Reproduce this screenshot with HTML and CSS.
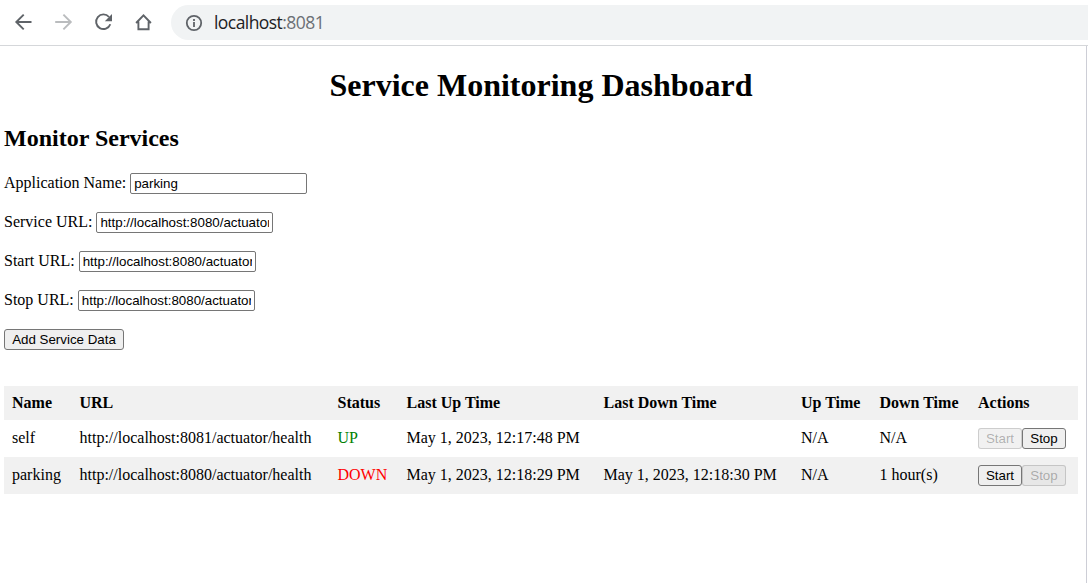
FILE: index.html
```html
<!DOCTYPE html>
<html lang="en">
<head>
<meta charset="utf-8">
<title>Service Monitoring Dashboard</title>
<link rel="stylesheet" href="styles.css">
</head>
<body>
<header class="toolbar">
  <nav class="nav">
    <svg class="icon" viewBox="0 0 20 20"><path d="M18.5 10H3.2M10.7 2.6 3.3 10l7.4 7.4"/></svg>
    <svg class="icon icon-off" viewBox="0 0 20 20"><path d="M2.2 10h15.3M10.4 2.6l7.4 7.4-7.4 7.4"/></svg>
    <svg class="icon" viewBox="0 0 20 20"><path d="M16 5A7.3 7.3 0 1 0 17.3 12.2"/><path class="solid" d="M19 2v7.2h-7.2z"/></svg>
    <svg class="icon" viewBox="0 0 20 20"><path d="M3.1 11 10.5 3.4l7.4 7.6M5.4 9.4v7.9h10.2V9.4"/></svg>
  </nav>
  <div class="address">
    <svg class="info" viewBox="0 0 18 18"><circle cx="9" cy="9" r="7.2"/><path d="M9 8v5M9 5v2"/></svg>
    <span class="host">localhost<span class="port">:8081</span></span>
  </div>
</header>
<div class="viewport">
  <main class="page">
    <h1>Service Monitoring Dashboard</h1>
    <h2>Monitor Services</h2>
    <form class="form">
      <div class="field"><label for="app">Application Name:</label><input id="app" type="text" value="parking"></div>
      <div class="field"><label for="svc">Service URL:</label><input id="svc" type="text" value="http://localhost:8080/actuator/health"></div>
      <div class="field"><label for="start">Start URL:</label><input id="start" type="text" value="http://localhost:8080/actuator/start"></div>
      <div class="field"><label for="stop">Stop URL:</label><input id="stop" type="text" value="http://localhost:8080/actuator/shutdown"></div>
      <button class="add" type="button">Add Service Data</button>
    </form>
    <table class="services">
      <colgroup><col class="c-name"><col class="c-url"><col class="c-status"><col class="c-last-up"><col class="c-last-down"><col class="c-up"><col class="c-down"><col></colgroup>
      <thead>
        <tr><th>Name</th><th>URL</th><th>Status</th><th>Last Up Time</th><th>Last Down Time</th><th>Up Time</th><th>Down Time</th><th>Actions</th></tr>
      </thead>
      <tbody>
        <tr><td>self</td><td>http://localhost:8081/actuator/health</td><td class="up">UP</td><td>May 1, 2023, 12:17:48 PM</td><td></td><td>N/A</td><td>N/A</td><td><div class="actions"><button type="button" disabled>Start</button><button type="button">Stop</button></div></td></tr>
        <tr><td>parking</td><td>http://localhost:8080/actuator/health</td><td class="down">DOWN</td><td>May 1, 2023, 12:18:29 PM</td><td>May 1, 2023, 12:18:30 PM</td><td>N/A</td><td>1 hour(s)</td><td><div class="actions"><button type="button">Start</button><button type="button" disabled>Stop</button></div></td></tr>
      </tbody>
    </table>
  </main>
</div>
</body>
</html>
```

FILE: styles.css
```css
* { box-sizing: border-box; }
body {
  margin: 0;
  height: 583px;
  overflow: hidden;
  display: flex;
  flex-direction: column;
  background: #fff;
  color: #000;
  font: 16px/18px "Liberation Serif", "Times New Roman", serif;
}
.toolbar {
  flex: none;
  display: flex;
  height: 46px;
  padding: 5px 0 5px 13px;
  border-bottom: 1px solid #d5d7da;
}
.nav { display: flex; gap: 20px; width: 158px; height: 34px; align-items: center; }
.icon { flex: none; width: 20px; height: 20px; fill: none; stroke: #5f6368; stroke-width: 1.9; }
.icon-off { stroke: #babcbe; }
.icon .solid { fill: #5f6368; stroke: none; }
.address {
  flex: 1;
  display: flex;
  align-items: center;
  gap: 11px;
  height: 35px;
  padding-left: 14px;
  background: #f1f3f4;
  border-radius: 18px 0 0 18px;
}
.info { width: 18px; height: 18px; fill: none; stroke: #5f6368; stroke-width: 1.8; }
.host { padding-bottom: 1px; font: 17.5px/24px "Open Sans", "Noto Sans", sans-serif; color: #202124; letter-spacing: -0.56px; }
.port { color: #6b6f74; }
.viewport { flex: 1; margin-right: 1px; border-right: 1px solid #cdced6; }
.page { padding: 21px 8px 0 4px; }
h1 { margin: 0 0 21px; font-size: 32px; line-height: 37px; text-align: center; }
h2 { margin: 0 0 21px; font-size: 24px; line-height: 27px; }
.form { display: flex; flex-direction: column; align-items: flex-start; gap: 18px; margin-bottom: 36px; }
.field { display: flex; align-items: center; gap: 4px; height: 21px; }
.field label { padding-bottom: 2px; }
input {
  width: 177px;
  height: 21px;
  padding: 1px 3px;
  border: 1px solid #767676;
  border-radius: 2px;
  background: #fff;
  color: #000;
  font: 13.333px "Liberation Sans", Arial, sans-serif;
}
button {
  height: 21px;
  padding: 0;
  border: 1px solid #767676;
  border-radius: 3px;
  background: #efefef;
  color: #000;
  font: 13.333px "Liberation Sans", Arial, sans-serif;
}
button:disabled { border-color: rgba(118, 118, 118, .3); background: rgba(239, 239, 239, .9); color: rgba(16, 16, 16, .3); }
.add { width: 120px; }
.services { width: 1074px; table-layout: fixed; border-collapse: collapse; }
.services th, .services td { padding: 8px 7.5px; text-align: left; white-space: nowrap; vertical-align: middle; }
.services th { background: #f1f1f1; }
.services td { padding-top: 7px; padding-bottom: 9px; }
.services td:last-child { padding: 8px; }
.services th:first-child, .services td:first-child,
.services th:nth-child(6), .services td:nth-child(6),
.services th:last-child { padding-left: 8px; }
.services tbody tr:nth-child(even) { background: #f1f1f1; }
.services tbody tr:nth-child(even) button:disabled { background: #e7e7e7; }
.c-name { width: 68px; }
.c-url { width: 258px; }
.c-status { width: 69px; }
.c-last-up { width: 197px; }
.c-last-down { width: 197px; }
.c-up { width: 79px; }
.c-down { width: 98px; }
.up { color: green; }
.down { color: red; }
.actions { display: flex; }
.actions button { width: 44px; }
```
